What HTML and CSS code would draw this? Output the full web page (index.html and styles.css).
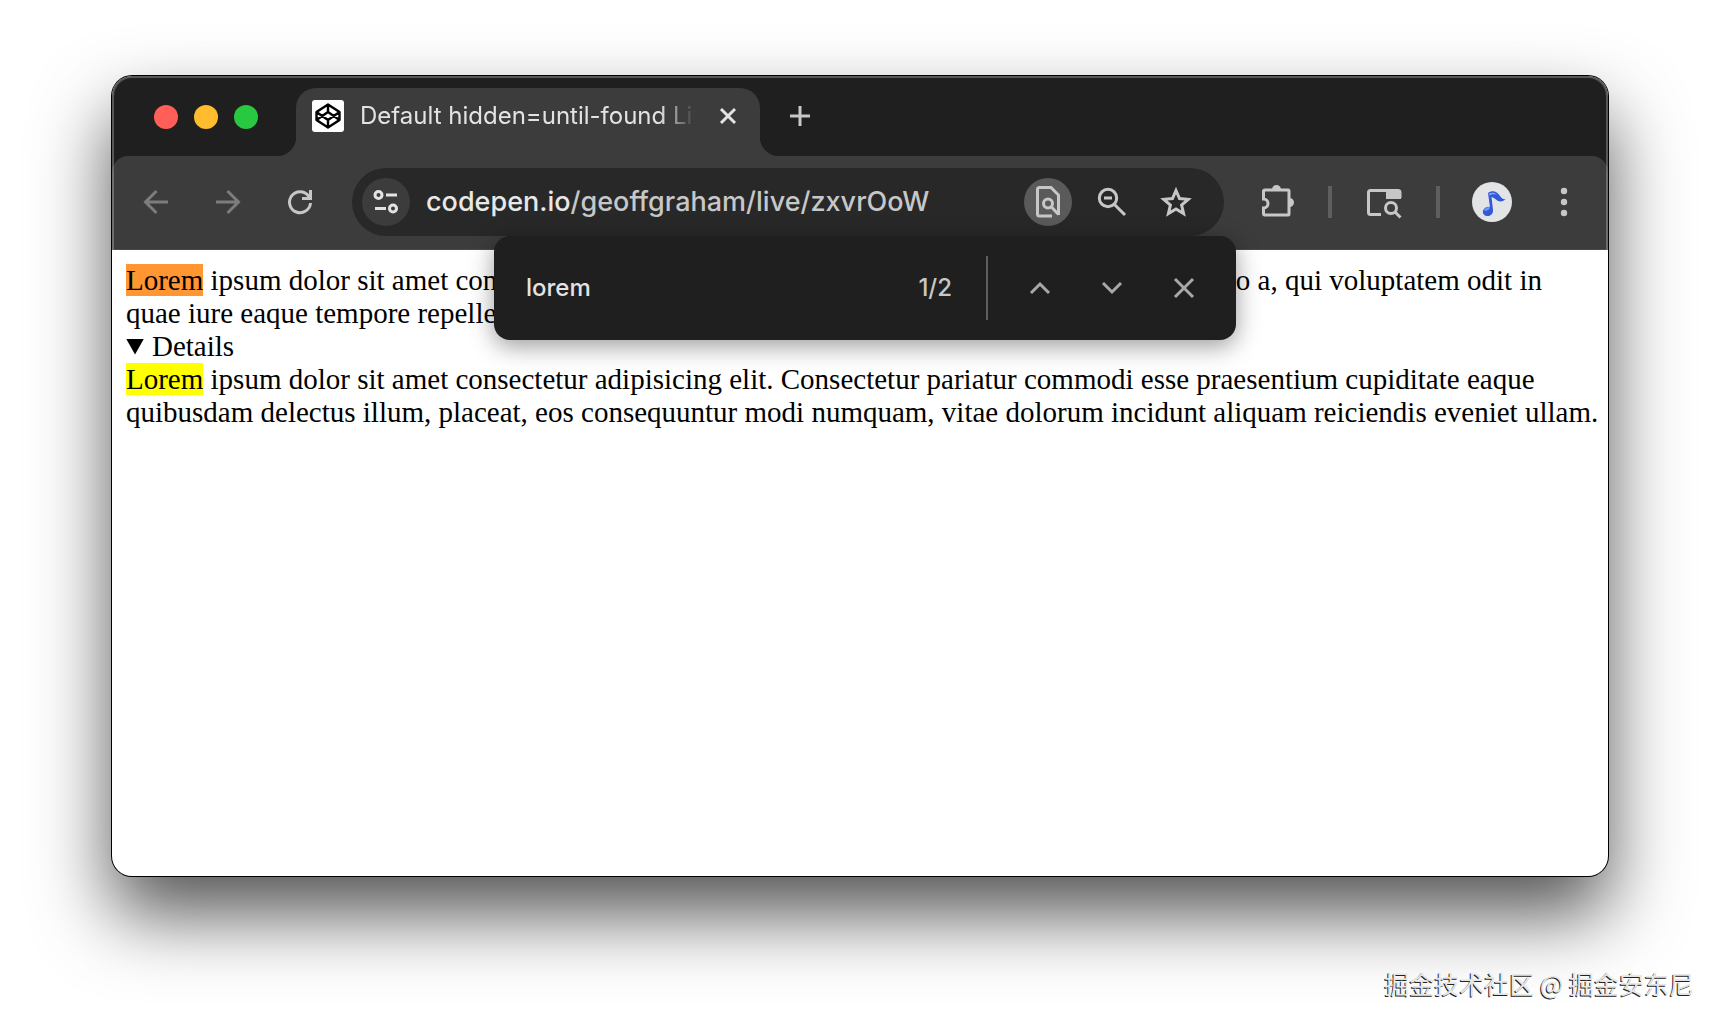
FILE: index.html
```html
<!DOCTYPE html>
<html lang="en">

<head>
  <meta charset="UTF-8">
  <title>Default hidden=until-found Live</title>
  <link rel="stylesheet" href="styles.css">
</head>

<body>

  <div class="window">
    <header class="chrome">
      <div class="tab-strip">
        <div class="lights">
          <button class="light red" aria-label="Close window"></button>
          <button class="light yellow" aria-label="Minimize"></button>
          <button class="light green" aria-label="Zoom"></button>
        </div>
        <div class="tab">
          <svg class="favicon" viewBox="0 0 32 32">
            <rect width="32" height="32" rx="3" fill="#fff"/>
            <path d="M16 4.500 27.500 12v8L16 27.500 4.500 20v-8ZM16 27.500V20M27.500 12 16 20 4.500 12M4.500 20 16 12l11.500 8M16 4.500V12" fill="none" stroke="#000" stroke-width="2.400" stroke-linejoin="round"/>
          </svg>
          <span class="tab-title">Default hidden=until-found Live</span>
          <button class="tab-close" aria-label="Close tab">
            <svg width="18" height="18" viewBox="0 0 18 18"><path d="M2 2l14 14M16 2L2 16"/></svg>
          </button>
        </div>
        <button class="new-tab" aria-label="New tab">
          <svg width="22" height="22" viewBox="0 0 22 22"><path d="M11 1v20M1 11h20"/></svg>
        </button>
      </div>

      <div class="toolbar">
        <nav class="nav">
          <button class="icon-btn off" aria-label="Back">
            <svg width="32" height="32" viewBox="0 0 32 32"><path d="M28 16H6M16.500 5 5.500 16l11 11"/></svg>
          </button>
          <button class="icon-btn off" aria-label="Forward">
            <svg width="32" height="32" viewBox="0 0 32 32"><path d="M4 16h22M15.500 5l11 11-11 11"/></svg>
          </button>
          <button class="icon-btn" aria-label="Reload">
            <svg width="32" height="32" viewBox="0 0 32 32"><path d="M26.500 17A10.500 10.500 0 1 1 24.500 10L26 12M26.500 4v8.500H18"/></svg>
          </button>
        </nav>

        <div class="omnibox">
          <button class="round-btn site" aria-label="Site information">
            <svg width="28" height="28" viewBox="0 0 28 28"><circle cx="6.500" cy="7" r="3.500"/><path d="M14 7h11M3 20.500h11"/><circle cx="21" cy="20.500" r="3.500"/></svg>
          </button>
          <a class="url" href="#"><b>codepen.io</b>/geoffgraham/live/zxvrOoW</a>
          <button class="round-btn active" aria-label="Find in page">
            <svg width="32" height="32" viewBox="0 0 32 32"><path d="M20 30H7.500Q5.500 30 5.500 28V3.500Q5.500 1.500 7.500 1.500H19L26.500 9v20"/><circle cx="16" cy="17.500" r="4.500"/><path d="M19.500 21l7 7.500"/></svg>
          </button>
          <button class="round-btn" aria-label="Zoom level">
            <svg width="32" height="32" viewBox="0 0 32 32"><circle cx="12" cy="12" r="8.700"/><path d="M8 12h8M18.500 18.500 29 29"/></svg>
          </button>
          <button class="round-btn" aria-label="Bookmark this page">
            <svg width="32" height="32" viewBox="0 0 32 32"><path d="M16 4.500l3.500 8 8.700.8-6.600 5.700 2 8.600L16 23l-7.600 4.600 2-8.600-6.600-5.700 8.700-.8Z"/></svg>
          </button>
        </div>

        <div class="actions">
          <button class="icon-btn" aria-label="Extensions">
            <svg width="36" height="36" viewBox="0 0 36 36"><path d="M9 6h21q1 0 1 1v23q0 1-1 1H7q-1.500 0-1.500-1.500V24c6 0 6-9 0-9V7.500Q5.500 6 7 6Z"/><path class="solid" d="M14 5.500a4.500 4.500 0 0 1 9 0ZM31.500 14a4.500 4.500 0 0 1 0 9Z"/></svg>
          </button>
          <span class="divider"></span>
          <button class="icon-btn" aria-label="Search tabs">
            <svg width="36" height="36" viewBox="0 0 36 36"><path d="M15 30.500H4.500Q2.500 30.500 2.500 28.500V8.500Q2.500 6.500 4.500 6.500H32Q34 6.500 34 8.500V14"/><path class="solid" d="M20 6h15v9H20Z"/><circle cx="25" cy="24" r="5.500"/><path d="M29 28l5.500 5.500"/></svg>
          </button>
          <span class="divider"></span>
          <button class="icon-btn" aria-label="Profile">
            <svg width="40" height="40" viewBox="0 0 40 40">
              <circle cx="20" cy="20" r="20" fill="#e3e4e6" stroke="none"/>
              <path d="M16 11c4-3 9-2 12 3 2 3 4 3.500 5.500 3-2 3-7 3-9 1-1.500-1.300-3-2.500-5-3l1.500 13c.5 4-3 6.500-6.500 6-4-.8-5-5.500-1.500-8 1.500-1.200 3.500-1.500 5-.8Z" fill="#3159d8" stroke="none"/>
              <path d="M17 11.500c3-1.500 6-1 8 1-3-.5-5-.5-8 1Z" fill="#7fa5f5" stroke="none"/>
              <ellipse cx="15" cy="27" rx="3" ry="1.500" fill="#7296ef" stroke="none" transform="rotate(-25 15 27)"/>
            </svg>
          </button>
        </div>
        <button class="icon-btn menu" aria-label="Menu">
          <svg width="36" height="36" viewBox="0 0 36 36"><g class="solid"><circle cx="18" cy="7" r="3.200"/><circle cx="18" cy="18" r="3.200"/><circle cx="18" cy="29" r="3.200"/></g></svg>
        </button>
      </div>
    </header>

    <main class="page">
      <div><mark class="current">Lorem</mark> ipsum dolor sit amet consectetur adipisicing elit. Dignissimos corporis nostrum explicabo a, qui voluptatem odit in quae iure eaque tempore repellendus nihil placeat.</div>
      <details open>
        <summary>Details</summary>
        <mark>Lorem</mark> ipsum dolor sit amet consectetur adipisicing elit. Consectetur pariatur commodi esse praesentium cupiditate eaque quibusdam delectus illum, placeat, eos consequuntur modi numquam, vitae dolorum incidunt aliquam reiciendis eveniet ullam.
      </details>
    </main>

    <div class="find-bar">
      <input type="text" class="find-input" value="lorem" aria-label="Find in page">
      <span class="count">1/2</span>
      <span class="find-divider"></span>
      <button class="find-btn" aria-label="Previous">
        <svg width="24" height="24" viewBox="0 0 24 24"><path d="M3 17l9-9 9 9"/></svg>
      </button>
      <button class="find-btn" aria-label="Next">
        <svg width="24" height="24" viewBox="0 0 24 24"><path d="M3 7l9 9 9-9"/></svg>
      </button>
      <button class="find-btn" aria-label="Close find bar">
        <svg width="24" height="24" viewBox="0 0 24 24"><path d="M3 3l18 18M21 3L3 21"/></svg>
      </button>
    </div>
  </div>

  <footer class="watermark" lang="zh">掘金技术社区 @ 掘金安东尼</footer>

</body>

</html>
```
FILE: styles.css
```css
* {
  box-sizing: border-box;
}

body {
  margin: 0;
  padding: 76px 112px 148px;
  min-height: 100vh;
  display: flex;
  background: #fff;
  font-family: Inter, "Liberation Sans", sans-serif;
  overflow: hidden;
}

button {
  display: flex;
  align-items: center;
  justify-content: center;
  padding: 0;
  border: none;
  background: none;
  color: #c7c7c7;
  flex: none;
  cursor: pointer;
}

svg {
  fill: none;
  stroke: currentColor;
  stroke-width: 3;
  flex: none;
}

.solid {
  fill: currentColor;
  stroke: none;
}

.window {
  position: relative;
  flex: 1;
  min-width: 0;
  background: #fff;
  border-radius: 20px;
  box-shadow: 0 0 0 1px #000, 0 38px 76px rgba(0, 0, 0, 0.68);
}

/* tabs */
.chrome {
  position: relative;
  background: #1f1f1f;
  border-radius: 20px 20px 0 0;
}

.chrome::after {
  content: "";
  position: absolute;
  inset: 0;
  border: 2px solid rgba(255, 255, 255, 0.25);
  border-bottom: none;
  border-radius: 20px 20px 0 0;
  pointer-events: none;
}

.tab-strip {
  display: flex;
  align-items: flex-end;
  height: 80px;
  padding-left: 42px;
}

.lights {
  display: flex;
  gap: 16px;
  margin-right: 38px;
  padding-bottom: 27px;
}

.light {
  width: 24px;
  height: 24px;
  border-radius: 50%;
}

.red {
  background: #ff5f57;
}

.yellow {
  background: #febc2e;
}

.green {
  background: #28c840;
}

.tab {
  position: relative;
  display: flex;
  align-items: center;
  width: 464px;
  height: 68px;
  padding: 0 20px 12px 16px;
  background: #3c3c3c;
  border-radius: 20px 20px 0 0;
}

/* curved feet on both sides of the tab */
.tab::before,
.tab::after {
  content: "";
  position: absolute;
  bottom: 0;
  width: 20px;
  height: 20px;
}

.tab::before {
  right: 100%;
  background: radial-gradient(circle at 0 0, #1f1f1f 20px, #3c3c3c 21px);
}

.tab::after {
  left: 100%;
  background: radial-gradient(circle at 100% 0, #1f1f1f 20px, #3c3c3c 21px);
}

.favicon {
  width: 32px;
  height: 32px;
  stroke: none;
}

.tab-title {
  flex: 1;
  margin: 0 16px;
  overflow: hidden;
  white-space: nowrap;
  font-size: 24px;
  line-height: 32px;
  color: #e3e3e3;
  -webkit-mask-image: linear-gradient(to right, #000 300px, transparent 335px);
  mask-image: linear-gradient(to right, #000 300px, transparent 335px);
}

.tab-close {
  width: 24px;
  height: 24px;
  color: #e3e3e3;
}

.new-tab {
  width: 48px;
  height: 48px;
  margin: 0 16px;
  margin-bottom: 16px;
}

/* toolbar */
.toolbar {
  display: flex;
  align-items: center;
  gap: 28px;
  height: 94px;
  padding: 0 20px 2px;
  background: #3c3c3c;
  border-bottom: 1px solid #4a4a4a;
  border-radius: 16px 16px 0 0;
}

.nav {
  display: flex;
  gap: 24px;
}

.icon-btn,
.round-btn {
  width: 48px;
  height: 48px;
}

.off {
  color: #7d7d7d;
}

.omnibox {
  flex: 1;
  min-width: 0;
  display: flex;
  align-items: center;
  gap: 16px;
  height: 68px;
  padding: 0 24px 0 10px;
  background: #282828;
  border-radius: 34px;
}

.round-btn {
  border-radius: 50%;
}

.site {
  background: #3c3c3c;
  color: #e3e3e3;
}

.active {
  background: #5a5a5a;
}

.url {
  flex: 1;
  min-width: 0;
  overflow: hidden;
  white-space: nowrap;
  font-size: 27px;
  font-weight: 500;
  line-height: 40px;
  color: #c7c7c7;
  text-decoration: none;
}

.url b {
  font-weight: 500;
  color: #e8e8e8;
}

.actions {
  display: flex;
  align-items: center;
  gap: 28px;
}

.divider {
  width: 4px;
  height: 32px;
  background: #5e5e5e;
}

.menu {
  margin-left: -4px;
}

/* page content */
.page {
  padding: 14px 8px 14px 14px;
  font-family: "Liberation Serif", serif;
  font-size: 29px;
  line-height: 33px;
  color: #000;
}

mark {
  background: #ffff00;
  color: #000;
}

mark.current {
  background: #ff9632;
}

summary {
  display: flex;
  align-items: center;
  gap: 8px;
}

summary::before {
  content: "";
  width: 18px;
  height: 16px;
  background: #000;
  clip-path: polygon(0 0, 100% 0, 50% 100%);
}

/* find bar */
.find-bar {
  position: absolute;
  top: 160px;
  right: 372px;
  display: flex;
  align-items: center;
  width: 742px;
  height: 104px;
  padding: 0 28px 0 32px;
  background: #1f1f1f;
  border-radius: 16px;
  box-shadow: 0 6px 24px rgba(0, 0, 0, 0.4);
}

.find-input {
  flex: 1;
  min-width: 0;
  padding: 0;
  border: none;
  outline: none;
  background: none;
  font: 500 24px/32px Inter, "Liberation Sans", sans-serif;
  color: #e3e3e3;
}

.count {
  font-size: 24px;
  font-weight: 500;
  line-height: 32px;
  color: #c7c7c7;
}

.find-divider {
  width: 2px;
  height: 64px;
  margin: 0 28px 0 34px;
  background: #5e5e5e;
}

.find-btn {
  width: 48px;
  height: 48px;
  color: #a8a8a8;
}

.find-btn + .find-btn {
  margin-left: 24px;
}

.watermark {
  position: absolute;
  right: 26px;
  bottom: 23px;
  font-family: "Noto Sans CJK SC", sans-serif;
  font-size: 25px;
  line-height: 36px;
  color: #e6e6e6;
  text-shadow: -1px 1px 0 #222;
}
```
